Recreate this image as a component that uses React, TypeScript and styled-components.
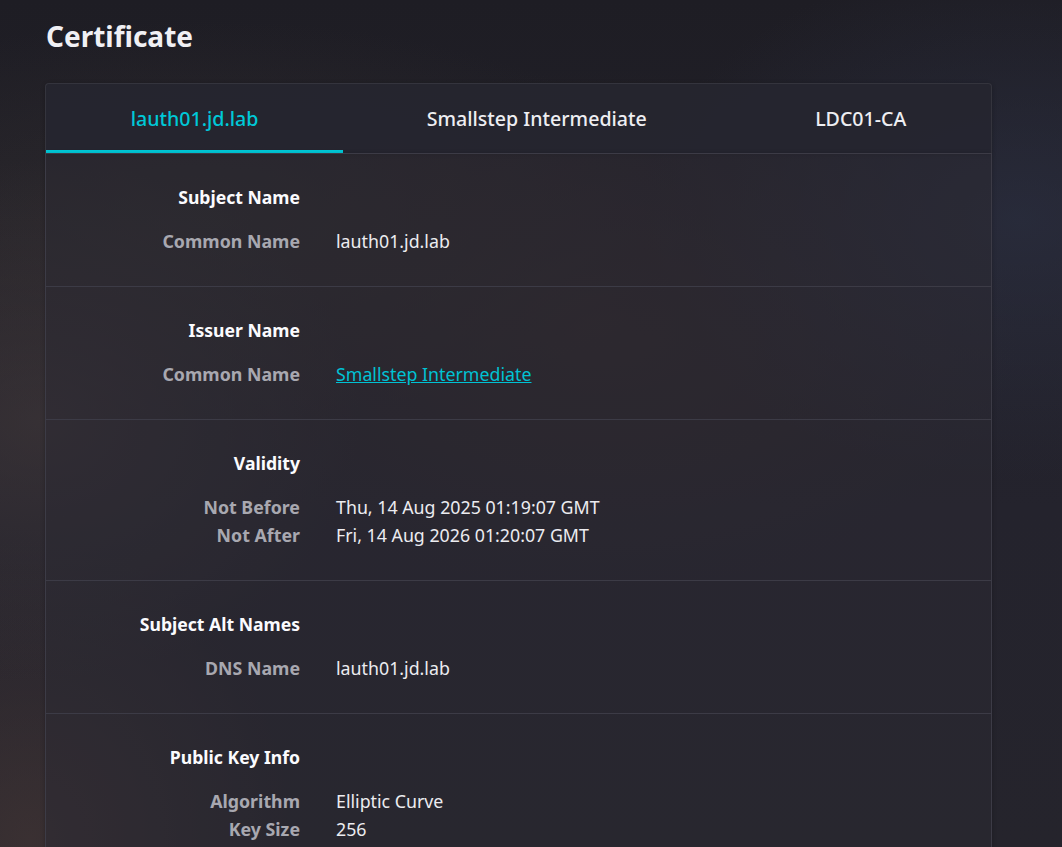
import React, { useState } from "react";
import styled, { createGlobalStyle } from "styled-components";

interface Field {
    label: string;
    value: string;
    link?: boolean;
}

interface Section {
    title: string;
    fields: Field[];
}

const tabs = ["lauth01.jd.lab", "Smallstep Intermediate", "LDC01-CA"];

const sections: Section[] = [
    { title: "Subject Name", fields: [{ label: "Common Name", value: "lauth01.jd.lab" }] },
    { title: "Issuer Name", fields: [{ label: "Common Name", value: "Smallstep Intermediate", link: true }] },
    {
        title: "Validity",
        fields: [
            { label: "Not Before", value: "Thu, 14 Aug 2025 01:19:07 GMT" },
            { label: "Not After", value: "Fri, 14 Aug 2026 01:20:07 GMT" },
        ],
    },
    { title: "Subject Alt Names", fields: [{ label: "DNS Name", value: "lauth01.jd.lab" }] },
    {
        title: "Public Key Info",
        fields: [
            { label: "Algorithm", value: "Elliptic Curve" },
            { label: "Key Size", value: "256" },
        ],
    },
];

const App: React.FC = () => {
    const [active, setActive] = useState(0);

    return (
        <>
            <GlobalStyle />
            <Page>
                <Title>Certificate</Title>
                <TabBar>
                    {tabs.map((tab, index) => (
                        <Tab key={tab} $active={index === active} onClick={() => setActive(index)}>
                            {tab}
                        </Tab>
                    ))}
                </TabBar>
                <Panel>
                    {sections.map((section) => (
                        <SectionBlock key={section.title}>
                            <SectionTitle>{section.title}</SectionTitle>
                            <FieldList>
                                {section.fields.map((field) => (
                                    <React.Fragment key={field.label}>
                                        <FieldLabel>{field.label}</FieldLabel>
                                        {field.link
                                            ? <FieldLink href="#">{field.value}</FieldLink>
                                            : <FieldValue>{field.value}</FieldValue>}
                                    </React.Fragment>
                                ))}
                            </FieldList>
                        </SectionBlock>
                    ))}
                </Panel>
            </Page>
        </>
    );
};

const GlobalStyle = createGlobalStyle`
    html, body {
        margin: 0;
        height: 100%;
        overflow: hidden;
    }

    body {
        font-family: "Noto Sans", "Open Sans", sans-serif;
        color: #fbfbfe;
        background-color: #1f1e26;
        background-image:
            radial-gradient(ellipse 320px 260px at 40px 420px, rgba(70, 60, 60, 0.55), transparent),
            radial-gradient(ellipse 260px 300px at 30px 840px, rgba(75, 58, 55, 0.55), transparent),
            radial-gradient(ellipse 380px 260px at 1020px 220px, rgba(45, 50, 70, 0.6), transparent),
            radial-gradient(ellipse 420px 260px at 600px 330px, rgba(62, 46, 44, 0.45), transparent),
            radial-gradient(ellipse 500px 200px at 200px 220px, rgba(58, 52, 50, 0.45), transparent),
            linear-gradient(180deg, #1e1d24 0%, #24232d 60%, #25242c 100%);
    }
`;

const Page = styled.div`
    padding: 17px 70px 0 45px;
    display: flex;
    flex-direction: column;
`;

const Title = styled.h1`
    margin: 0 0 28px 1px;
    font-size: 28px;
    font-weight: 700;
    line-height: 38px;
    color: #f0f0f4;
`;

const TabBar = styled.div`
    display: flex;
    height: 69px;
    background: rgba(38, 38, 48, 0.9);
    border: 1px solid #34343d;
    border-bottom: none;
    border-radius: 4px 4px 0 0;
    box-shadow: 0 1px 4px rgba(0, 0, 0, 0.25);
`;

interface TabProps {
    $active: boolean;
}

const Tab = styled.button<TabProps>`
    flex: 1 1 auto;
    margin: 0 0 0 -1px;
    padding: 2px 0 0;
    border: none;
    border-bottom: 3px solid ${({ $active }) => ($active ? "#00c8d7" : "transparent")};
    background: transparent;
    color: ${({ $active }) => ($active ? "#00c8d7" : "#eeeef2")};
    font-family: "Noto Sans", "Open Sans", sans-serif;
    font-size: 19.6px;
    font-weight: 500;
    cursor: pointer;

    &:first-child {
        margin-left: 0;
    }
`;

const Panel = styled.div`
    background: rgba(43, 42, 51, 0.55);
    border: 1px solid #3c3b46;
    border-bottom: none;
    box-shadow: 0 1px 4px rgba(0, 0, 0, 0.25);
`;

const SectionBlock = styled.div`
    display: grid;
    grid-template-columns: 254px 1fr;
    column-gap: 36px;
    padding: 29px 0 31px;
    border-bottom: 1px solid #3c3b46;
`;

const SectionTitle = styled.h2`
    grid-column: 1;
    margin: 0 0 16px;
    font-size: 17.6px;
    font-weight: 700;
    line-height: 28px;
    text-align: right;
    color: #fbfbfe;
`;

const FieldList = styled.div`
    grid-column: 1 / span 2;
    display: grid;
    grid-template-columns: 254px 1fr;
    column-gap: 36px;
`;

const FieldLabel = styled.span`
    font-size: 17.8px;
    font-weight: 700;
    line-height: 28px;
    text-align: right;
    color: #a8a8b0;
`;

const FieldValue = styled.span`
    font-size: 17.8px;
    line-height: 28px;
    color: #ececf0;
`;

const FieldLink = styled.a`
    justify-self: start;
    font-size: 17.8px;
    line-height: 28px;
    color: #00c2d4;
    text-decoration: underline;
`;

export default App;
